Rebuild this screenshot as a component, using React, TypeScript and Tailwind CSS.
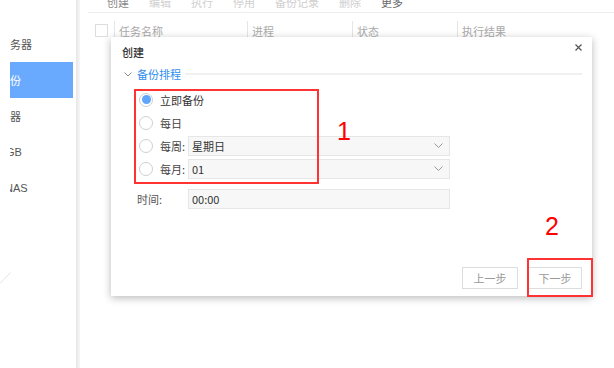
import React from 'react';

const tools = ['创建', '编辑', '执行', '停用', '备份记录', '删除', '更多'];
const sideItems = ['务器', '份', '器', 'GB', 'NAS'];

function Radio({ checked }: { checked?: boolean }) {
  return (
    <span className="w-[14px] h-[14px] rounded-full border border-[#cfcfcf] bg-white flex items-center justify-center shrink-0">
      {checked && <span className="w-[9px] h-[9px] rounded-full bg-[#5fa5fb]" />}
    </span>
  );
}

function Chevron() {
  return (
    <svg width="9" height="5" viewBox="0 0 9 5">
      <path d="M0.5 0.5 L4.5 4.5 L8.5 0.5" fill="none" stroke="#999" strokeWidth="1" />
    </svg>
  );
}

function SelectBox({ value }: { value: string }) {
  return (
    <div className="w-[262px] h-[20px] bg-[#f7f7f7] border border-[#e6e6e6] flex items-center justify-between pl-[3px] pr-[6px] text-[#333]">
      <span>{value}</span>
      <Chevron />
    </div>
  );
}

export default function App() {
  return (
    <div className="w-[614px] h-[368px] relative overflow-hidden bg-white flex font-['Noto_Sans_CJK_SC',sans-serif] text-[11px] leading-[12px]">
      {/* sidebar */}
      <aside className="w-[76px] shrink-0 pl-[10px] pt-[26px] text-[#555] flex flex-col">
        <div className="overflow-hidden flex flex-col w-[63px]">
          {sideItems.map((s, i) => (
            <div
              key={s}
              className={
                'h-[36px] flex items-center whitespace-nowrap ' +
                (i === 1 ? 'bg-[#69aaff] text-white' : '')
              }
            >
              <span className={i === 3 ? 'ml-[-4px] font-[Liberation_Sans]' : i === 4 ? 'ml-[-5px] font-[Liberation_Sans]' : ''}>{s}</span>
            </div>
          ))}
        </div>
        <svg className="mt-[66px] ml-[-10px]" width="11" height="12" viewBox="0 0 11 12">
          <path d="M10.5 0.5 L0 11.5" stroke="#ddd" strokeWidth="0.8" />
        </svg>
      </aside>
      <div className="w-[4px] shrink-0 bg-[linear-gradient(to_right,#e6e6e6,#f7f7f7)]" />

      {/* main */}
      <main className="flex-1 flex flex-col pl-[8px]">
        <div className="h-[13px] border-b border-[#eee] flex items-end pb-[4px] pl-[19px] gap-[20px] leading-[11px] text-[#cfcfcf]">
          {tools.map((t, i) => (
            <span key={t} className={i === 0 ? 'text-[#888]' : i === 6 ? 'text-[#666]' : ''}>
              {t}
            </span>
          ))}
        </div>
        <div className="mt-[8px] h-[18px] flex items-center text-[#aaa]">
          <div className="w-[26px] pl-[7px] flex items-center">
            <span className="w-[13px] h-[13px] border border-[#ddd] bg-white" />
          </div>
          <div className="w-[133px] h-full border-l border-[#e5e5e5] pl-[4px] pt-[2px] flex items-center">任务名称</div>
          <div className="w-[105px] h-full border-l border-[#e5e5e5] pl-[4px] pt-[2px] flex items-center">进程</div>
          <div className="w-[105px] h-full border-l border-[#e5e5e5] pl-[4px] pt-[2px] flex items-center">状态</div>
          <div className="flex-1 h-full border-l border-[#e5e5e5] pl-[4px] pt-[2px] flex items-center">执行结果</div>
        </div>
      </main>

      {/* dialog */}
      <div className="absolute left-[111px] top-[37px] w-[481px] h-[259px] bg-white shadow-[0_2px_8px_rgba(0,0,0,0.28)] flex flex-col">
        <div className="flex justify-between items-start pl-[11px] pr-[10px] pt-[7px]">
          <span className="mt-[2px] font-medium text-[#333]">创建</span>
          <svg width="7" height="7" viewBox="0 0 7 7">
            <path d="M0.5 0.5 L6.5 6.5 M6.5 0.5 L0.5 6.5" stroke="#555" strokeWidth="1.2" />
          </svg>
        </div>

        <div className="mt-[10px] h-[12px] flex items-center pl-[13px] pr-[10px]">
          <svg width="8" height="5" viewBox="0 0 8 5">
            <path d="M0.5 0.5 L4 4 L7.5 0.5" fill="none" stroke="#888" strokeWidth="1" />
          </svg>
          <span className="ml-[5px] text-[#2f8ff0]">备份排程</span>
          <span className="flex-1 h-[2px] bg-[#f0f0f0] ml-[4px]" />
        </div>

        <div className="mt-[8px] pl-[28px] flex flex-col text-[#444]">
          <div className="h-[23px] flex items-center">
            <Radio checked />
            <span className="ml-[7px] text-[#333]">立即备份</span>
          </div>
          <div className="h-[23px] flex items-center">
            <Radio />
            <span className="ml-[7px]">每日</span>
          </div>
          <div className="h-[23px] flex items-center">
            <Radio />
            <span className="ml-[7px] w-[28px]">每周:</span>
            <SelectBox value="星期日" />
          </div>
          <div className="h-[23px] flex items-center">
            <Radio />
            <span className="ml-[7px] w-[28px]">每月:</span>
            <SelectBox value="01" />
          </div>
        </div>

        <div className="mt-[9px] pl-[26px] flex items-center text-[#555]">
          <span className="w-[51px]">时间:</span>
          <div className="w-[262px] h-[20px] bg-[#f7f7f7] border border-[#e6e6e6] flex items-center pl-[3px] text-[#333]">
            00:00
          </div>
        </div>

        <div className="mt-auto flex justify-end gap-[10px] pr-[10px] pb-[7px] text-[#999]">
          <button className="w-[56px] h-[22px] border border-[#ddd] bg-white flex items-center justify-center">上一步</button>
          <button className="w-[54px] h-[22px] border border-[#ddd] bg-white flex items-center justify-center">下一步</button>
        </div>
      </div>

      {/* annotations */}
      <div className="absolute left-[134px] top-[89px] w-[185px] h-[95px] border-2 border-[#ff3333]" />
      <span className="absolute left-[337px] top-[117px] text-[25px] leading-[28px] text-[#ff0000] font-['Liberation_Sans',sans-serif]">1</span>
      <span className="absolute left-[545px] top-[212px] text-[25px] leading-[28px] text-[#ff0000] font-['Liberation_Sans',sans-serif]">2</span>
      <div className="absolute left-[527px] top-[258px] w-[66px] h-[39px] border-2 border-[#ff3333]" />
    </div>
  );
}
